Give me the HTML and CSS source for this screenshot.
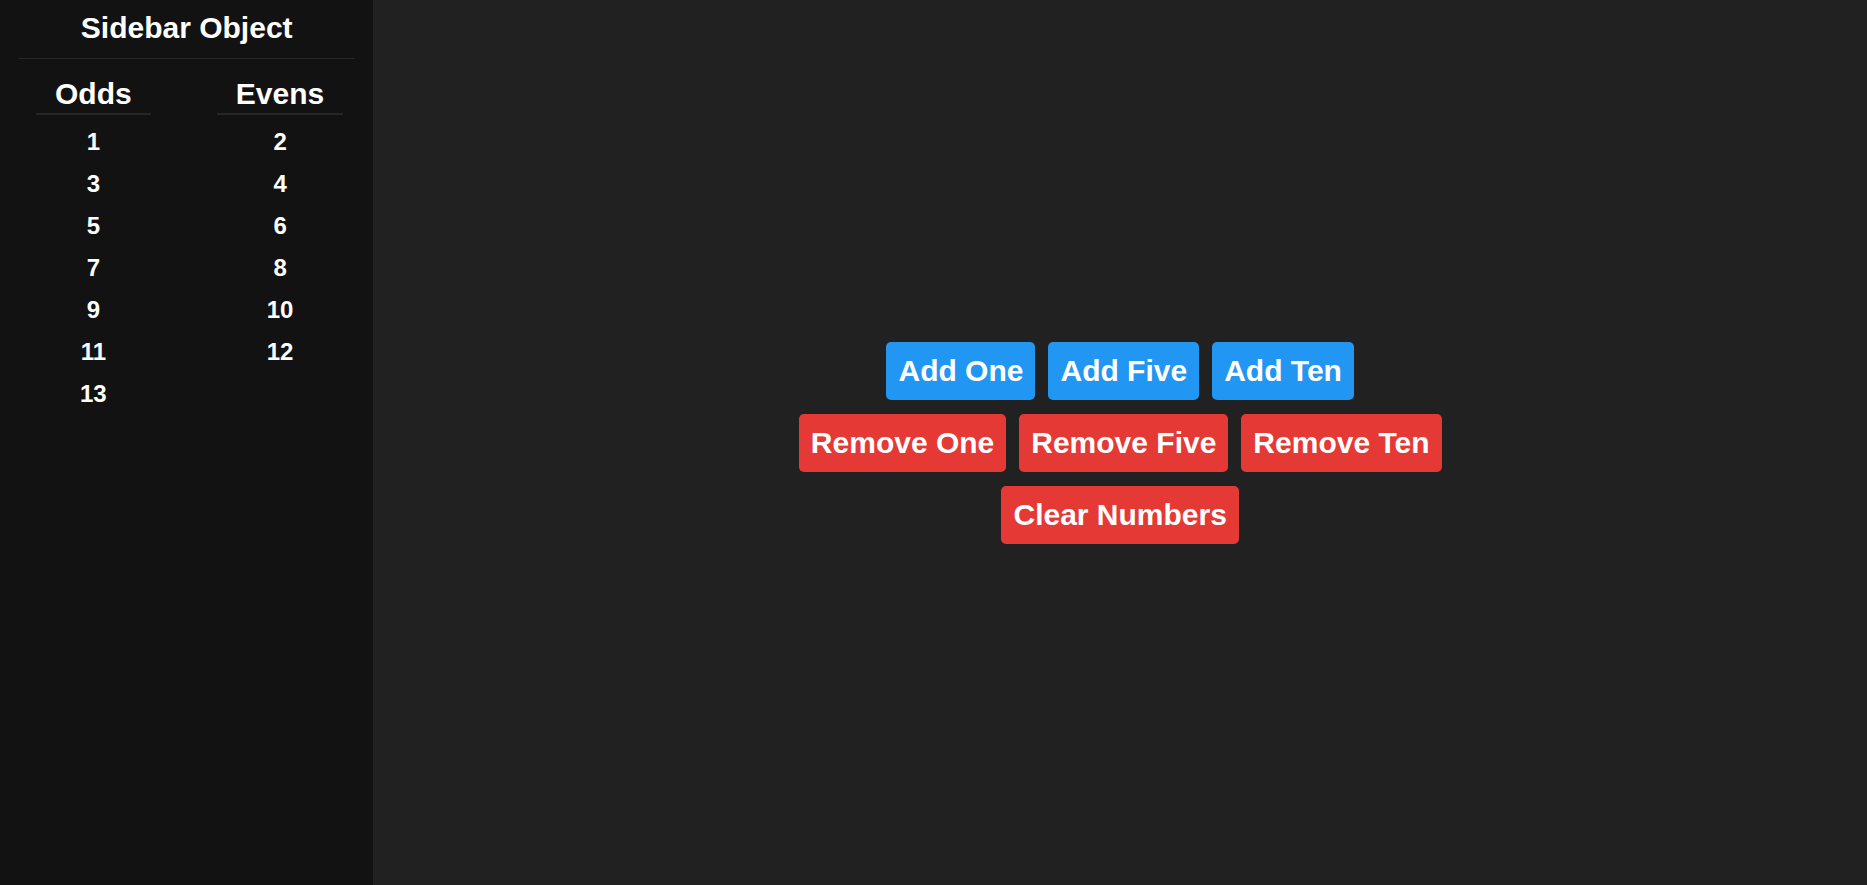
FILE: index.html
```html
<!DOCTYPE html>
<html lang="en">
<head>
<meta charset="utf-8">
<title>Sidebar Object</title>
<link rel="stylesheet" href="styles.css">
</head>
<body>
<div class="app">
  <aside class="sidebar">
    <h2 class="sidebar-title">Sidebar Object</h2>
    <div class="columns">
      <div class="column">
        <h3 class="column-head">Odds</h3>
        <ul class="numbers">
          <li>1</li><li>3</li><li>5</li><li>7</li><li>9</li><li>11</li><li>13</li>
        </ul>
      </div>
      <div class="column">
        <h3 class="column-head">Evens</h3>
        <ul class="numbers">
          <li>2</li><li>4</li><li>6</li><li>8</li><li>10</li><li>12</li>
        </ul>
      </div>
    </div>
  </aside>
  <main class="main">
    <div class="controls">
      <div class="row">
        <button class="btn btn-add">Add One</button>
        <button class="btn btn-add">Add Five</button>
        <button class="btn btn-add">Add Ten</button>
      </div>
      <div class="row">
        <button class="btn btn-remove">Remove One</button>
        <button class="btn btn-remove">Remove Five</button>
        <button class="btn btn-remove">Remove Ten</button>
      </div>
      <div class="row">
        <button class="btn btn-remove">Clear Numbers</button>
      </div>
    </div>
  </main>
</div>
</body>
</html>
```
FILE: styles.css
```css
* { box-sizing: border-box; }
html, body {
  margin: 0;
  padding: 0;
  height: 100%;
}
body {
  font-family: "Liberation Sans", Arial, sans-serif;
  color: #ffffff;
  background: #212121;
  overflow: hidden;
}
.app {
  display: flex;
  height: 100vh;
}
.sidebar {
  width: 20%;
  flex: 0 0 20%;
  background: #121212;
  height: 100%;
}
.sidebar-title {
  margin: 0 5%;
  padding: 11px 0 13px;
  font-size: 30px;
  font-weight: bold;
  text-align: center;
  border-bottom: 1px solid #272727;
}
.columns {
  display: flex;
  margin-top: 18px;
}
.column {
  flex: 1 1 50%;
  text-align: center;
}
.column-head {
  display: inline-block;
  margin: 0;
  padding: 0 19px 2px;
  font-size: 30px;
  font-weight: bold;
  border-bottom: 2px solid #262626;
}
.numbers {
  list-style: none;
  margin: 0;
  padding: 6px 0 0;
}
.numbers li {
  font-size: 24px;
  font-weight: bold;
  padding: 7px 0;
}
.main {
  flex: 1 1 auto;
  display: flex;
  align-items: center;
  justify-content: center;
  background: #212121;
}
.controls {
  display: flex;
  flex-direction: column;
  align-items: center;
  gap: 14px;
}
.row {
  display: flex;
  gap: 13px;
  justify-content: center;
}
.btn {
  font-family: "Liberation Sans", Arial, sans-serif;
  font-size: 30px;
  font-weight: bold;
  color: #ffffff;
  border: none;
  border-radius: 5px;
  padding: 12px;
  line-height: normal;
  cursor: pointer;
}
.btn-add { background: #2196f3; }
.btn-remove { background: #e53935; }
```
